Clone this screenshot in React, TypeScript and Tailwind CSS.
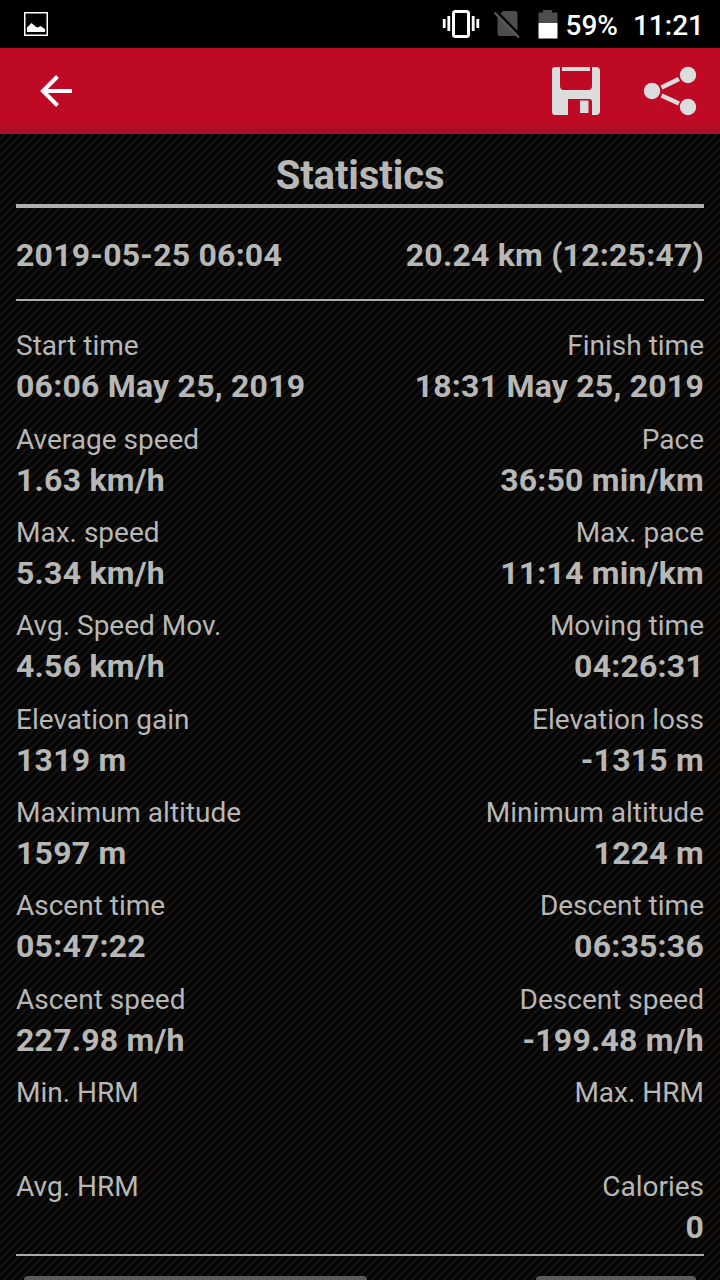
const stats = [
  { left: ['Start time', '06:06 May 25, 2019'], right: ['Finish time', '18:31 May 25, 2019'] },
  { left: ['Average speed', '1.63 km/h'],       right: ['Pace', '36:50 min/km'] },
  { left: ['Max. speed', '5.34 km/h'],          right: ['Max. pace', '11:14 min/km'] },
  { left: ['Avg. Speed Mov.', '4.56 km/h'],     right: ['Moving time', '04:26:31'] },
  { left: ['Elevation gain', '1319 m'],         right: ['Elevation loss', '-1315 m'] },
  { left: ['Maximum altitude', '1597 m'],       right: ['Minimum altitude', '1224 m'] },
  { left: ['Ascent time', '05:47:22'],          right: ['Descent time', '06:35:36'] },
  { left: ['Ascent speed', '227.98 m/h'],       right: ['Descent speed', '-199.48 m/h'] },
  { left: ['Min. HRM', ''],                     right: ['Max. HRM', ''] },
  { left: ['Avg. HRM', ''],                     right: ['Calories', '0'] },
];

function StatusBar() {
  return (
    <div className="flex h-12 shrink-0 items-center bg-black pl-6 pr-4 text-white">
      <svg width="24" height="24" viewBox="0 0 24 24" aria-hidden="true">
        <rect x="0.75" y="0.75" width="22.5" height="22.5" fill="none" stroke="currentColor" strokeWidth="1.5" />
        <path d="M3 20v-4.5l4.5-4.5 4 3.5 2 1 3-1.5 4.5 3v3z" fill="currentColor" />
      </svg>

      {/* Vibrate mode */}
      <svg className="ml-auto" width="38" height="30" viewBox="0 0 38 30" aria-hidden="true">
        <rect x="11.5" y="2.5" width="15" height="25" rx="2" fill="none" stroke="currentColor" strokeWidth="3" />
        <path d="M2.2 10v9M6.8 7v15M31.2 7v15M35.8 10v9" stroke="currentColor" strokeWidth="2.8" />
      </svg>

      {/* No SIM */}
      <svg className="ml-[13px]" width="28" height="30" viewBox="0 0 28 30" aria-hidden="true">
        <path d="M10 2h12a2.5 2.5 0 0 1 2.5 2.5v20A2.5 2.5 0 0 1 22 27H7a2.5 2.5 0 0 1-2.5-2.5V8z" fill="#4d4d4d" />
        <path d="M3.5 2.5l25 25" stroke="#000" strokeWidth="2.5" />
        <path d="M1.5 3.5l24.5 25" stroke="#5a5a5a" strokeWidth="2.2" />
      </svg>

      <svg className="ml-[17px]" width="20" height="30" viewBox="0 0 20 30" aria-hidden="true">
        <path d="M5 1h9v2.5h5.5V14H.5V3.5H5z" fill="#4d4d4d" />
        <path d="M.5 14h19v15.5H.5z" fill="currentColor" />
      </svg>
      <span className="ml-2 pt-[3px] text-[28px] font-medium leading-none">59%</span>
      <span className="ml-[15px] pt-[3px] text-[28px] font-medium leading-none">11:21</span>
    </div>
  );
}

function Toolbar() {
  return (
    <header className="flex h-[86px] shrink-0 items-center bg-linear-to-b from-[#bf0a26] from-88% to-[#a81024] to-96% pl-[39px] pr-[23px]">
      <button aria-label="Back" className="text-white">
        <svg width="34" height="34" viewBox="0 0 34 34" fill="none" stroke="currentColor" strokeWidth="4">
          <path d="M33 17H4M18.5 2.5L4 17l14.5 14.5" />
        </svg>
      </button>

      <button aria-label="Save" className="ml-auto text-[#dcdcdc]">
        <svg width="50" height="50" viewBox="0 0 50 50">
          <path
            fillRule="evenodd"
            fill="currentColor"
            d="M4 1h5v19a4 4 0 0 0 4 4h24a4 4 0 0 0 4-4V1h4a4 4 0 0 1 4 4v40a4 4 0 0 1-4 4h-4V36a3 3 0 0 0-3-3H17v16H4a3 3 0 0 1-3-3V4a3 3 0 0 1 3-3zM11 1h28v4H11zM29 34.5h8.5v12.5H29z"
          />
        </svg>
      </button>

      <button aria-label="Share" className="ml-[42px] text-[#dcdcdc]">
        <svg width="54" height="50" viewBox="0 0 54 50">
          <g fill="currentColor">
            <circle cx="9" cy="25" r="8.2" />
            <circle cx="45" cy="9" r="8.2" />
            <circle cx="45" cy="41" r="8.2" />
          </g>
          <path d="M18.5 21.5l17.5-8.5M18.5 29.5L36 37.5" stroke="currentColor" strokeWidth="4.5" />
        </svg>
      </button>
    </header>
  );
}

function Stat({ label, value }: { label: string; value: string }) {
  return (
    <div>
      <dt className="h-[41px] text-[28px] leading-[41px]">{label}</dt>
      <dd className="h-[40px] text-[32px] font-bold leading-[40px] tracking-[0.22px]">{value}</dd>
    </div>
  );
}

export default function App() {
  return (
    <div className="flex h-[1280px] w-[720px] flex-col overflow-hidden bg-black font-['Roboto',sans-serif]">
      <StatusBar />
      <Toolbar />

      <main className="flex min-h-0 flex-1 flex-col overflow-hidden bg-[repeating-linear-gradient(135deg,#020202_0px,#030303_2px,#161513_3.4px,#161513_4.2px,#020202_5.657px)] px-4 text-[#b7b7b6]">
        <h1 className="h-[70px] shrink-0 text-center text-[40px] font-bold leading-[84px] tracking-[-0.1px]">Statistics</h1>
        <div className="h-1 shrink-0 bg-[#b0afad]" />

        <div className="flex h-[91px] shrink-0 items-center justify-between pt-[3px] text-[32px] font-bold tracking-[0.22px]">
          <span>2019-05-25 06:04</span>
          <span>20.24 km (12:25:47)</span>
        </div>
        <div className="h-0.5 shrink-0 bg-[#aaa8a6]" />

        <dl className="flex shrink-0 flex-col gap-[12.36px] pt-[24.3px]">
          {stats.map(({ left, right }) => (
            <div key={left[0]} className="flex justify-between">
              <Stat label={left[0]} value={left[1]} />
              <div className="text-right">
                <Stat label={right[0]} value={right[1]} />
              </div>
            </div>
          ))}
        </dl>

        <div className="mt-[7.6px] h-0.5 shrink-0 bg-[#aaa8a6]" />

        {/* Action buttons, cut off by the bottom of the screen */}
        <div className="mt-5 flex shrink-0 justify-between px-2">
          <div className="h-20 w-[343px] rounded bg-[#5c5a5a]" />
          <div className="h-20 w-[160px] rounded bg-[#5c5a5a]" />
        </div>
      </main>
    </div>
  );
}
